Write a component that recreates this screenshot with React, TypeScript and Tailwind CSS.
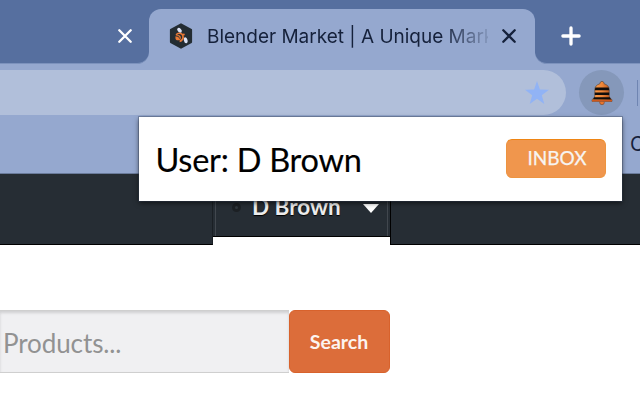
import React from 'react';

function Cross({ className }: { className: string }) {
  return (
    <svg viewBox="0 0 14 14" className={className} fill="none" stroke="currentColor" strokeWidth="2.3" strokeLinecap="round">
      <path d="M1.3 1.3 12.7 12.7M12.7 1.3 1.3 12.7" />
    </svg>
  );
}

function BeeLogo() {
  return (
    <svg viewBox="0 0 24 26" className="h-[26px] w-6 shrink-0">
      <path d="M12 1.2 22.2 6.9V19.1L12 24.8 1.8 19.1V6.9Z" fill="#242d33" stroke="#242d33" strokeWidth="1.8" strokeLinejoin="round" />
      <ellipse cx="10.5" cy="7.3" rx="1.8" ry="2.8" transform="rotate(-42 10.5 7.3)" fill="#dce2f5" />
      <ellipse cx="16.7" cy="17.3" rx="1.8" ry="3.1" transform="rotate(-14 16.7 17.3)" fill="#dce2f5" />
      <path d="M7.2 12.2C8.2 9.6 12.7 9.5 13.8 12.5C14.8 15.2 13 18 10.6 18.3" fill="none" stroke="#e87835" strokeWidth="1.7" />
      <ellipse cx="9.1" cy="14.7" rx="2.7" ry="2.6" fill="#e87835" />
      <path d="M7.2 13.2Q10.2 12.5 10.6 15.6" fill="none" stroke="#30302f" strokeWidth=".9" />
      <circle cx="14.8" cy="11.4" r="1" fill="#e87835" />
    </svg>
  );
}

function Bell() {
  return (
    <svg viewBox="0 0 22 26" className="h-[26px] w-[22px]">
      <defs>
        <linearGradient id="bell" x1="0" x2="1">
          <stop stopColor="#ffa14d" />
          <stop offset=".5" stopColor="#ef873a" />
          <stop offset="1" stopColor="#a94a18" />
        </linearGradient>
      </defs>
      <circle cx="11" cy="21.4" r="2.3" fill="#e8752c" stroke="#70442d" strokeWidth=".6" />
      <path d="M9.3 1.2Q11 -.8 12.7 1.2L13.2 2.8Q18 4.2 18.2 8.4V15Q18.5 17.5 21 18.7V20.4H1V18.7Q3.5 17.5 3.8 15V8.4Q4 4.2 8.8 2.8Z" fill="url(#bell)" stroke="#5d4c42" strokeWidth=".7" />
      <path d="M4.3 6.5H17.7L18.2 9.2H3.8ZM3.8 11.4H18.2V14H3.8ZM3.1 16.3H18.9L20 18.4H2Z" fill="#100d0b" />
      <path d="M1 18.9H21V20.4H1Z" fill="#cf591d" />
    </svg>
  );
}

function TabStrip() {
  return (
    <div className="flex h-[70px] bg-[#95a8cf]">
      <div className="h-16 w-[149px] rounded-br-xl border-b border-[#7c92bd] bg-[#566f9f] pl-[117.5px] pt-[29px]">
        <Cross className="h-[14px] w-[14px] text-white" />
      </div>
      <div className="h-10 w-[386px] bg-[#566f9f] pt-[9px]">
        <div className="flex h-[61px] items-start rounded-t-xl bg-[#95a8cf]">
          <div className="ml-5 mt-[14px]"><BeeLogo /></div>
          <div className="ml-[14px] mt-[14px] w-[281px] overflow-hidden whitespace-nowrap font-['Inter',sans-serif] text-[19px] leading-7 tracking-[-0.01px] text-[#15213b] [mask-image:linear-gradient(to_right,black_83%,transparent_103%)]">
            Blender Market | A Unique Market
          </div>
          <Cross className="ml-[14px] mt-[20px] h-[14px] w-[14px] shrink-0 text-[#15213b]" />
        </div>
      </div>
      <div className="h-16 w-[105px] rounded-bl-xl border-b border-[#7c92bd] bg-[#566f9f] pl-[26px] pt-[26px]">
        <svg viewBox="0 0 20 20" className="h-5 w-5" stroke="white" strokeWidth="3.3" strokeLinecap="round">
          <path d="M10 1.9V18.1M1.9 10H18.1" />
        </svg>
      </div>
    </div>
  );
}

function AddressBar() {
  return (
    <div className="flex h-[46px] bg-[#95a8cf]">
      <div className="flex h-[45px] w-[566px] justify-end rounded-r-full bg-[#b1bfda] pr-[17px] pt-[11px]">
        <svg viewBox="0 0 24 24" className="h-6 w-6" fill="#91b3f5">
          <path d="M12 0 14.9 8.5 24 8.7 16.8 14.2 19.3 23 12 17.8 4.7 23 7.2 14.2 0 8.7 9.1 8.5Z" />
        </svg>
      </div>
      <div className="ml-[13px] flex h-[45px] w-[45px] justify-center rounded-full bg-[#8598ba] pt-[11px]">
        <Bell />
      </div>
      <div className="ml-[13px] mt-[10px] h-[26px] w-px bg-[#6f85b2]" />
    </div>
  );
}

function NotificationPopup() {
  return (
    <div className="absolute left-[139px] top-[117px] flex h-[84px] w-[483px] items-center justify-between bg-white pl-[16.5px] pr-4 shadow-[0_0_0_1px_#303d5155,0_2px_5px_#0009]">
      <span className="mt-0.5 whitespace-nowrap font-['Lato',sans-serif] text-[32.5px] leading-10 tracking-[-0.25px] text-black [-webkit-text-stroke:0.15px_#000]">User: D Brown</span>
      <button className="mb-px h-[39px] w-[100px] rounded-md border border-[#ed9440] border-t-[#ee8514] bg-[#f0964d] pl-0.5 font-['Lato',sans-serif] text-[19px] text-[#f7f4f1] [-webkit-text-stroke:0.25px_#f7f4f1]">INBOX</button>
    </div>
  );
}

export default function App() {
  return (
    <div className="relative h-[400px] w-[640px] overflow-hidden bg-white">
      <TabStrip />
      <AddressBar />
      <div className="flex h-[58px] justify-end border-b border-[#6a7b9b] bg-[#95a8cf] pt-[14px]">
        <span className="w-[10px] font-['Inter',sans-serif] text-[20px] leading-[29px] text-[#15213b]">C</span>
      </div>
      <nav className="flex h-[71px] bg-[#262d34]">
        <div className="w-[213px] border-b border-r border-black border-r-[#1a1f24]" />
        <div className="w-[177px] bg-white">
          <div className="h-[63px] border-b border-black bg-[#262d34] px-0.5">
            <div className="flex h-full items-start border-x border-[#41474e] pt-[17px]">
              <div className="ml-[16px] mt-[12px] h-[9px] w-[9px] rounded-full border-[3px] border-[#1c2024] bg-[#30373d]" />
              <span className="ml-[11px] w-[100px] whitespace-nowrap font-['Lato',sans-serif] text-[22.5px] font-bold leading-8 text-[#ececec] [text-shadow:0_1px_1px_#000]">D Brown</span>
              <svg viewBox="0 0 16 9" className="ml-[11px] mt-[13px] h-[9px] w-4 shrink-0 fill-white"><path d="M0 0H16L8 9Z" /></svg>
            </div>
          </div>
        </div>
        <div className="flex-1 border-b border-l border-black" />
      </nav>
      <div className="mt-[65px] flex h-[63px] w-[390px]">
        <div className="w-[289px] border-y border-[#cfcfcf] bg-[#f0f0f2] pl-[3px] pt-[14px] font-['Lato',sans-serif] text-[26px] leading-9 tracking-[-0.1px] text-[#929292] shadow-[inset_0_2px_3px_#0002]">Products...</div>
        <button className="w-[101px] rounded-md border border-[#d8622c] bg-[#dc6d3a] pb-0 pr-px font-['Lato',sans-serif] text-[19.5px] font-bold text-[#fcf4f0]">Search</button>
      </div>
      <NotificationPopup />
    </div>
  );
}
